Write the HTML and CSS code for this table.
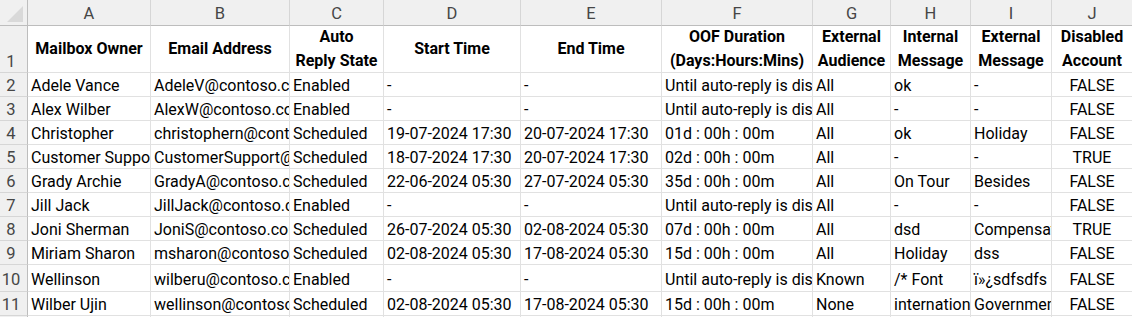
FILE: index.html
```html
<!DOCTYPE html>
<html lang="en">
<head>
<meta charset="utf-8">
<title>Auto Reply Report</title>
<link rel="stylesheet" href="styles.css">
</head>
<body>
<div class="sheet">
  <div class="corner"><svg class="corner-tri" width="16" height="16" viewBox="0 0 16 16"><polygon points="0,16 16,16 16,0" fill="#d9d9d9"/></svg></div>
  <div class="colhdr">A</div><div class="colhdr">B</div><div class="colhdr">C</div><div class="colhdr">D</div><div class="colhdr">E</div><div class="colhdr">F</div><div class="colhdr">G</div><div class="colhdr">H</div><div class="colhdr">I</div><div class="colhdr">J</div>

  <div class="rowhdr">1</div>
  <div class="th">Mailbox Owner</div>
  <div class="th">Email Address</div>
  <div class="th">Auto<br>Reply State</div>
  <div class="th">Start Time</div>
  <div class="th">End Time</div>
  <div class="th">OOF Duration<br>(Days:Hours:Mins)</div>
  <div class="th">External<br>Audience</div>
  <div class="th">Internal<br>Message</div>
  <div class="th">External<br>Message</div>
  <div class="th">Disabled<br>Account</div>

  <div class="rowhdr">2</div>
  <div class="td">Adele Vance</div><div class="td">AdeleV@contoso.com</div><div class="td">Enabled</div><div class="td">-</div><div class="td">-</div><div class="td">Until auto-reply is disabled</div><div class="td">All</div><div class="td">ok</div><div class="td">-</div><div class="td c">FALSE</div>

  <div class="rowhdr">3</div>
  <div class="td">Alex Wilber</div><div class="td">AlexW@contoso.com</div><div class="td">Enabled</div><div class="td">-</div><div class="td">-</div><div class="td">Until auto-reply is disabled</div><div class="td">All</div><div class="td">-</div><div class="td">-</div><div class="td c">FALSE</div>

  <div class="rowhdr">4</div>
  <div class="td">Christopher</div><div class="td">christophern@contoso.com</div><div class="td">Scheduled</div><div class="td">19-07-2024 17:30</div><div class="td">20-07-2024 17:30</div><div class="td">01d : 00h : 00m</div><div class="td">All</div><div class="td">ok</div><div class="td">Holiday</div><div class="td c">FALSE</div>

  <div class="rowhdr">5</div>
  <div class="td">Customer Support</div><div class="td">CustomerSupport@contoso.com</div><div class="td">Scheduled</div><div class="td">18-07-2024 17:30</div><div class="td">20-07-2024 17:30</div><div class="td">02d : 00h : 00m</div><div class="td">All</div><div class="td">-</div><div class="td">-</div><div class="td c">TRUE</div>

  <div class="rowhdr">6</div>
  <div class="td">Grady Archie</div><div class="td">GradyA@contoso.com</div><div class="td">Scheduled</div><div class="td">22-06-2024 05:30</div><div class="td">27-07-2024 05:30</div><div class="td">35d : 00h : 00m</div><div class="td">All</div><div class="td">On Tour</div><div class="td">Besides</div><div class="td c">FALSE</div>

  <div class="rowhdr">7</div>
  <div class="td">Jill Jack</div><div class="td">JillJack@contoso.com</div><div class="td">Enabled</div><div class="td">-</div><div class="td">-</div><div class="td">Until auto-reply is disabled</div><div class="td">All</div><div class="td">-</div><div class="td">-</div><div class="td c">FALSE</div>

  <div class="rowhdr">8</div>
  <div class="td">Joni Sherman</div><div class="td">JoniS@contoso.com</div><div class="td">Scheduled</div><div class="td">26-07-2024 05:30</div><div class="td">02-08-2024 05:30</div><div class="td">07d : 00h : 00m</div><div class="td">All</div><div class="td">dsd</div><div class="td">Compensation</div><div class="td c">TRUE</div>

  <div class="rowhdr">9</div>
  <div class="td">Miriam Sharon</div><div class="td">msharon@contoso.com</div><div class="td">Scheduled</div><div class="td">02-08-2024 05:30</div><div class="td">17-08-2024 05:30</div><div class="td">15d : 00h : 00m</div><div class="td">All</div><div class="td">Holiday</div><div class="td">dss</div><div class="td c">FALSE</div>

  <div class="rowhdr tall">10</div>
  <div class="td tall">Wellinson</div><div class="td tall">wilberu@contoso.com</div><div class="td tall">Enabled</div><div class="td tall">-</div><div class="td tall">-</div><div class="td tall">Until auto-reply is disabled</div><div class="td tall">Known</div><div class="td tall">/* Font</div><div class="td tall">ï»¿sdfsdfs</div><div class="td tall c">FALSE</div>

  <div class="rowhdr">11</div>
  <div class="td">Wilber Ujin</div><div class="td">wellinson@contoso.com</div><div class="td">Scheduled</div><div class="td">02-08-2024 05:30</div><div class="td">17-08-2024 05:30</div><div class="td">15d : 00h : 00m</div><div class="td">None</div><div class="td">international</div><div class="td">Government</div><div class="td c">FALSE</div>

  <div class="rowhdr"></div>
  <div class="td"></div><div class="td"></div><div class="td"></div><div class="td"></div><div class="td"></div><div class="td"></div><div class="td"></div><div class="td"></div><div class="td"></div><div class="td"></div>
</div>
</body>
</html>
```

FILE: styles.css
```css
html, body {
  margin: 0;
  padding: 0;
  background: #ffffff;
  overflow: hidden;
}

.sheet {
  display: grid;
  grid-template-columns: 28px 123px 139px 94px 137px 141px 151px 78px 80px 81px 81px;
  grid-template-rows: 26px 47px repeat(8, 24px) 27px 24px 24px;
  width: 1133px;
  font-family: Roboto, "Liberation Sans", Arial, sans-serif;
  font-size: 16px;
  color: #000;
}

.sheet > div {
  box-sizing: border-box;
  overflow: hidden;
  white-space: nowrap;
  border-right: 1px solid #e1e1e1;
  border-bottom: 1px solid #e1e1e1;
}

.corner {
  background: #f0f0f0;
  display: flex;
  align-items: flex-end;
  justify-content: flex-end;
  padding: 0 4px 3px 0;
  border-right-color: #bdbdbd !important;
  border-bottom-color: #bdbdbd !important;
}

.corner-tri {
  display: block;
}

.colhdr {
  background: #f0f0f0;
  color: #464646;
  font-size: 16.5px;
  line-height: 18px;
  text-align: center;
  display: flex;
  align-items: flex-end;
  justify-content: center;
  padding-bottom: 2px;
  border-right-color: #d6d6d6 !important;
  border-bottom-color: #bdbdbd !important;
}

.rowhdr {
  background: #f0f0f0;
  color: #464646;
  font-size: 16.5px;
  line-height: 18px;
  display: flex;
  align-items: flex-end;
  justify-content: center;
  padding: 0 5px 1px 0;
  border-right-color: #bdbdbd !important;
  border-bottom-color: #d6d6d6 !important;
}

.rowhdr.tall {
  padding-bottom: 2px;
}

.th {
  font-weight: bold;
  font-size: 16px;
  line-height: 24px;
  white-space: normal !important;
  text-align: center;
  display: flex;
  align-items: center;
  justify-content: center;
}

.td {
  display: flex;
  align-items: flex-end;
  line-height: 18px;
  padding: 0 0 1px 3px;
}

.td.tall {
  padding-bottom: 2px;
}

.td.c {
  justify-content: center;
  padding-left: 0;
}
```
